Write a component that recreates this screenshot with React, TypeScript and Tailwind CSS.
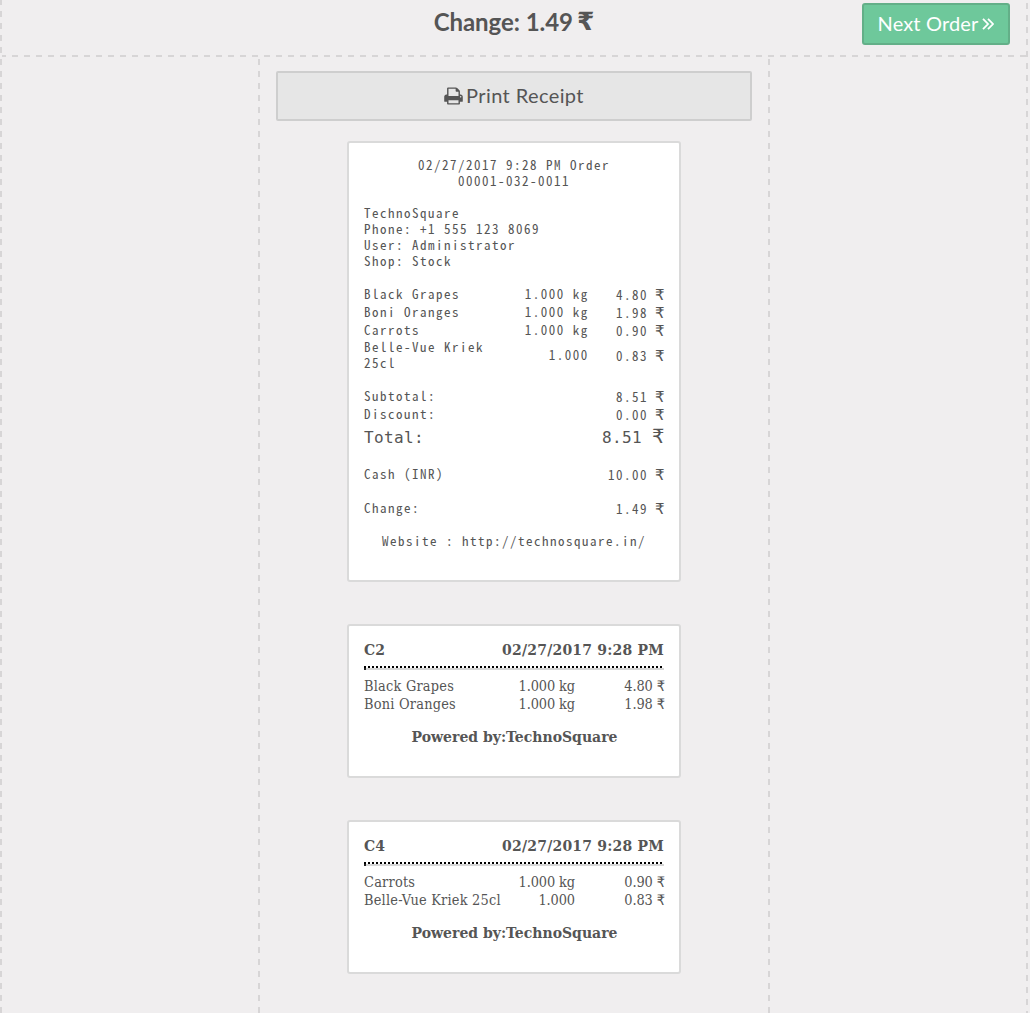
import React from "react";

const mono = "font-['Noto_Sans_Mono_CJK_SC','Noto_Sans_Mono_CJK_JP','Liberation_Mono',monospace] slashed-zero";

function Rupee({ className = "" }: { className?: string }) {
  return <span className={"font-['DejaVu_Sans',sans-serif] tracking-normal " + className}>₹</span>;
}

function PrintIcon() {
  return (
    <svg viewBox="0 0 1664 1792" className="mt-px mr-[3px] h-5 w-[19px]" fill="currentColor">
      <path d="M384 1536h896v-256h-896v256zM384 896h896v-384h-160q-40 0-68-28t-28-68v-160h-640v640zM1536 960q0-26-19-45t-45-19-45 19-19 45 19 45 45 19 45-19 19-45zM1664 960v416q0 13-9.5 22.5t-22.5 9.5h-224v160q0 40-28 68t-68 28h-960q-40 0-68-28t-28-68v-160h-224q-13 0-22.5-9.5t-9.5-22.5v-416q0-79 56.5-135.5t135.5-56.5h64v-544q0-40 28-68t68-28h672q40 0 88 20t76 48l152 152q28 28 48 76t20 88v256h64q79 0 135.5 56.5t56.5 135.5z" />
    </svg>
  );
}

function DashV({ className = "" }: { className?: string }) {
  return (
    <div
      className={
        "w-[2px] shrink-0 bg-[linear-gradient(to_bottom,#d7d5d6_50%,transparent_50%)] bg-[length:2px_12px] bg-repeat-y " +
        className
      }
    />
  );
}

function Price({ value }: { value: string }) {
  return (
    <span className="flex w-[76px] items-center justify-end">
      <span className="mt-[2px]">{value}</span>
      <Rupee className="mt-px ml-[7px] w-[9px] text-[15px]" />
    </span>
  );
}

function Line({ name, qty, price, className = "h-[18px]" }: { name: string; qty?: string; price: string; className?: string }) {
  return (
    <div className={"flex items-center " + className}>
      <span className="w-[148px]">{name}</span>
      <span className="w-[79px] text-right">{qty}</span>
      <span className="flex-1" />
      <Price value={price} />
    </div>
  );
}

type Item = { name: string; qty: string; price: string };

function Ticket({ code, items }: { code: string; items: Item[] }) {
  return (
    <section className="mt-[42px] h-[154px] w-[334px] rounded-[3px] border-2 border-[#dadada] bg-white px-[15px] pt-[15px] font-['DejaVu_Serif',serif] text-[14px] leading-[18px]">
      <div className="flex h-[18px] justify-between font-bold">
        <span className="tracking-[0.2px]">{code}</span>
        <span className="tracking-[0.2px]">02/27/2017 9:28 PM</span>
      </div>
      <div className="mt-[7px] h-[2px] bg-[linear-gradient(to_right,#000_50%,transparent_50%)] bg-[length:4px_2px] bg-repeat-x" />
      <div className="flex h-[2px] bg-[#d6d6d6]">
        <span className="w-[2px] bg-[#222]" />
      </div>
      <div className="mt-[7px] font-['DejaVu_Serif_Condensed','DejaVu_Serif',serif] text-[14.4px] [font-stretch:condensed]">
        {items.map((it) => (
          <div key={it.name} className="flex h-[18px] whitespace-nowrap">
            <span className="w-[140px] tracking-[0.22px]">{it.name}</span>
            <span className="w-[71px] text-right tracking-[-0.1px]">{it.qty}</span>
            <span className="flex flex-1 justify-end tracking-[-0.1px]">
              {it.price}
              <Rupee className="-mr-px ml-[4px] text-[14.5px]" />
            </span>
          </div>
        ))}
      </div>
      <div className="mt-[15px] pl-px text-center font-bold">Powered by:TechnoSquare</div>
    </section>
  );
}

export default function App() {
  return (
    <div className="flex h-[1013px] w-[1030px] overflow-hidden bg-[#f0eeef] font-['Lato',sans-serif] text-[#555]">
      <DashV className="bg-[position:0_-1px]" />
      <div className="flex w-[1024px] flex-col">
        <header className="grid h-[55px] grid-cols-[1fr_auto_1fr] items-start">
          <span />
          <h1 className="mt-[4px] flex h-9 items-center text-[24px] leading-9 font-bold tracking-[-0.05px]">
            Change: 1.49
            <Rupee className="ml-[4px] text-[25px] leading-9" />
          </h1>
          <button className="mt-[3px] mr-[16px] flex h-[42px] w-[148px] items-center justify-center justify-self-end rounded-[3px] border-2 border-[#63af88] bg-[#6ec89b] pb-[2px] text-[20px] tracking-[0.15px] text-white">
            Next Order
            <svg viewBox="0 0 12 12" className="mt-[2px] ml-[4px] size-3" fill="none" stroke="currentColor" strokeWidth="1.8">
              <path d="M1 0.8l5 5.2-5 5.2M6 0.8l5 5.2-5 5.2" />
            </svg>
          </button>
        </header>
        <div className="h-[2px] bg-[linear-gradient(to_right,#d7d5d6_50%,transparent_50%)] bg-[length:12px_2px] bg-[position:-2px_0] bg-repeat-x" />
        <div className="flex flex-1">
          <aside className="w-[256px]" />
          <DashV className="bg-[position:0_2px]" />
          <main className="flex w-[508px] flex-col items-center pt-[14px]">
            <button className="flex h-[50px] w-[476px] items-center justify-center rounded-[2px] border-2 border-[#cecece] bg-[#e6e6e6] pb-[2px] text-[20px] tracking-[0.4px]">
              <PrintIcon />
              Print Receipt
            </button>
            <section className={"mt-[20px] h-[441px] w-[334px] rounded-[3px] border-2 border-[#dadada] bg-white px-[15px] pt-[14px] text-[13px] leading-4 tracking-[1.5px] whitespace-nowrap " + mono}>
              <div className="text-center">
                <p>02/27/2017 9:28 PM Order</p>
                <p>00001-032-0011</p>
              </div>
              <div className="mt-4">
                <p>TechnoSquare</p>
                <p>Phone: +1 555 123 8069</p>
                <p>User: Administrator</p>
                <p>Shop: Stock</p>
              </div>
              <div className="mt-[16px]">
                <Line name="Black Grapes" qty="1.000 kg" price="4.80" />
                <Line name="Boni Oranges" qty="1.000 kg" price="1.98" />
                <Line name="Carrots" qty="1.000 kg" price="0.90" />
                <Line name="Belle-Vue Kriek 25cl" qty="1.000" price="0.83" className="h-[32px] whitespace-normal" />
              </div>
              <div className="mt-[16px]">
                <Line name="Subtotal:" price="8.51" />
                <Line name="Discount:" price="0.00" />
                <div className="flex h-[27px] items-center justify-between font-['DejaVu_Sans_Mono',monospace] text-[16px] tracking-[0.37px]">
                  <span className="mt-[2px]">Total:</span>
                  <span className="flex items-center">
                    <span className="mt-[2px]">8.51</span>
                    <Rupee className="ml-[10px] w-[12px] text-[19.5px]" />
                  </span>
                </div>
              </div>
              <Line name="Cash (INR)" price="10.00" className="mt-[15px] h-[18px]" />
              <Line name="Change:" price="1.49" className="mt-[16px] h-[18px]" />
              <div className="mt-[16px] text-center">Website : http://technosquare.in/</div>
            </section>
            <Ticket
              code="C2"
              items={[
                { name: "Black Grapes", qty: "1.000 kg", price: "4.80" },
                { name: "Boni Oranges", qty: "1.000 kg", price: "1.98" },
              ]}
            />
            <Ticket
              code="C4"
              items={[
                { name: "Carrots", qty: "1.000 kg", price: "0.90" },
                { name: "Belle-Vue Kriek 25cl", qty: "1.000", price: "0.83" },
              ]}
            />
          </main>
          <DashV className="bg-[position:0_2px]" />
          <aside className="w-[256px]" />
        </div>
      </div>
      <DashV className="bg-[position:0_3px]" />
    </div>
  );
}
